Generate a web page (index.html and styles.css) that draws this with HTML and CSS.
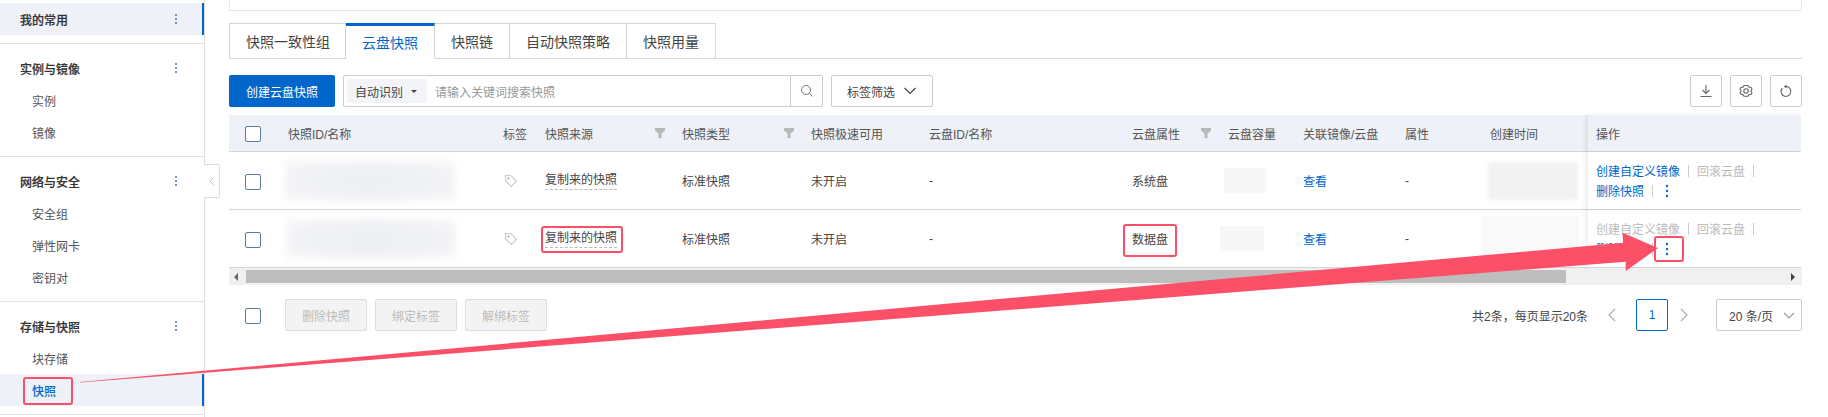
FILE: index.html
```html
<!DOCTYPE html>
<html lang="zh-CN">
<head>
    <meta charset="UTF-8" />
    <meta name="viewport" content="width=device-width, initial-scale=1" />
    <title>云盘快照</title>
    <link rel="stylesheet" href="styles.css">
</head>
<body>
    <div class="page">
        <aside class="sidebar">
            <div class="nav-group nav-group-first">
                <div class="nav-title nav-active">我的常用 <svg class="kebab" width="4" height="12" viewBox="0 0 4 12"><circle cx="2" cy="2" r="1"/><circle cx="2" cy="6" r="1"/><circle cx="2" cy="10" r="1"/></svg></div>
            </div>
            <div class="nav-group">
                <div class="nav-title">实例与镜像 <svg class="kebab" width="4" height="12" viewBox="0 0 4 12"><circle cx="2" cy="2" r="1"/><circle cx="2" cy="6" r="1"/><circle cx="2" cy="10" r="1"/></svg></div>
                <div class="nav-item">实例</div>
                <div class="nav-item">镜像</div>
            </div>
            <div class="nav-group">
                <div class="nav-title">网络与安全 <svg class="kebab" width="4" height="12" viewBox="0 0 4 12"><circle cx="2" cy="2" r="1"/><circle cx="2" cy="6" r="1"/><circle cx="2" cy="10" r="1"/></svg></div>
                <div class="nav-item">安全组</div>
                <div class="nav-item">弹性网卡</div>
                <div class="nav-item">密钥对</div>
            </div>
            <div class="nav-group">
                <div class="nav-title">存储与快照 <svg class="kebab" width="4" height="12" viewBox="0 0 4 12"><circle cx="2" cy="2" r="1"/><circle cx="2" cy="6" r="1"/><circle cx="2" cy="10" r="1"/></svg></div>
                <div class="nav-item">块存储</div>
                <div class="nav-item nav-active nav-current">快照</div>
            </div>
            <div class="collapse-tab">
                <svg width="6" height="10" viewBox="0 0 6 10"><path d="M5 1 1 5l4 4" fill="none" stroke="#c4c4c4" stroke-width="1"/></svg>
            </div>
        </aside>

        <main class="content">
            <div class="top-box"></div>

            <div class="tabs">
                <div class="tab tab-first">快照一致性组</div>
                <div class="tab tab-active">云盘快照</div>
                <div class="tab">快照链</div>
                <div class="tab">自动快照策略</div>
                <div class="tab">快照用量</div>
            </div>

            <div class="toolbar">
                <button class="btn-primary">创建云盘快照</button>
                <div class="search">
                    <div class="search-type">自动识别 <span class="caret"></span></div>
                    <div class="search-input">请输入关键词搜索快照</div>
                    <div class="search-btn">
                        <svg width="14" height="14" viewBox="0 0 14 14" fill="none" stroke="#777" stroke-width="1"><circle cx="6" cy="6" r="4.5"/><path d="m9.5 9.5 3 3"/></svg>
                    </div>
                </div>
                <button class="btn-tags">标签筛选
                    <svg width="14" height="8" viewBox="0 0 14 8" fill="none" stroke="#444" stroke-width="1.2"><path d="m1.500 1 5.500 5.500L12.500 1"/></svg>
                </button>
                <div class="toolbar-right">
                    <button class="btn-icon">
                        <svg width="14" height="14" viewBox="0 0 14 14" fill="none" stroke="#666" stroke-width="1.100"><path d="M7 1v8.500M3.500 6 7 9.500 10.500 6M1.500 12.500h11"/></svg>
                    </button>
                    <button class="btn-icon">
                        <svg width="14" height="14" viewBox="0 0 14 14" fill="none" stroke="#666" stroke-width="1.100" stroke-linejoin="round"><path d="M5 1.500h4l1 1.700 2 .1 1 1.700-1 1.900 1 1.900-1 1.700-2 .1-1 1.700H5l-1-1.700-2-.1-1-1.700 1-1.900-1-1.900 1-1.700 2-.1z"/><circle cx="7" cy="7" r="2.200"/></svg>
                    </button>
                    <button class="btn-icon">
                        <svg width="14" height="14" viewBox="0 0 14 14" fill="none" stroke="#666" stroke-width="1.100"><path d="M7 2.500A4.900 4.900 0 1 1 3.400 4"/><path d="M7.500 .5v4L4.800 2.500z" fill="#666" stroke="none"/></svg>
                    </button>
                </div>
            </div>

            <div class="table-wrap">
                <table class="snap-table">
                    <colgroup>
                        <col class="c-check"><col class="c-id"><col class="c-tag"><col class="c-src"><col class="c-type"><col class="c-fast"><col class="c-disk"><col class="c-attr"><col class="c-size"><col class="c-link"><col class="c-prop"><col class="c-time"><col class="c-op">
                    </colgroup>
                    <thead>
                        <tr>
                            <th class="cell-check"><span class="checkbox"></span></th>
                            <th>快照ID/名称</th>
                            <th>标签</th>
                            <th><div class="th-filter">快照来源 <svg class="funnel" width="12" height="12" viewBox="0 0 12 12"><path d="M1 1h10v2.500L7.500 6.500V11h-3V6.500L1 3.500z"/></svg></div></th>
                            <th><div class="th-filter">快照类型 <svg class="funnel" width="12" height="12" viewBox="0 0 12 12"><path d="M1 1h10v2.500L7.500 6.500V11h-3V6.500L1 3.500z"/></svg></div></th>
                            <th>快照极速可用</th>
                            <th>云盘ID/名称</th>
                            <th><div class="th-filter">云盘属性 <svg class="funnel" width="12" height="12" viewBox="0 0 12 12"><path d="M1 1h10v2.500L7.500 6.500V11h-3V6.500L1 3.500z"/></svg></div></th>
                            <th>云盘容量</th>
                            <th>关联镜像/云盘</th>
                            <th>属性</th>
                            <th>创建时间</th>
                            <th class="cell-op">操作</th>
                        </tr>
                    </thead>
                    <tbody>
                        <tr>
                            <td class="cell-check"><span class="checkbox"></span></td>
                            <td><div class="blur-id"></div></td>
                            <td><svg class="tag-icon" width="14" height="14" viewBox="0 0 14 14" fill="none" stroke="#ccc" stroke-width="1.200"><path d="M1.500 1.500h5.200l5.800 5.800-5.200 5.200-5.800-5.800z"/><circle cx="4.500" cy="4.500" r=".8"/></svg></td>
                            <td><span class="dashed">复制来的快照</span></td>
                            <td>标准快照</td>
                            <td>未开启</td>
                            <td>-</td>
                            <td>系统盘</td>
                            <td><div class="blur-size"></div></td>
                            <td><a class="link">查看</a></td>
                            <td>-</td>
                            <td><div class="blur-time"></div></td>
                            <td class="cell-op">
                                <div class="op-line"><a class="link">创建自定义镜像</a><i class="sep"></i><span class="off">回滚云盘</span><i class="sep"></i></div>
                                <div class="op-line"><a class="link">删除快照</a><i class="sep"></i><svg class="kebab kebab-op" width="4" height="14" viewBox="0 0 4 14"><circle cx="2" cy="2" r="1.200"/><circle cx="2" cy="7" r="1.200"/><circle cx="2" cy="12" r="1.200"/></svg></div>
                            </td>
                        </tr>
                        <tr>
                            <td class="cell-check"><span class="checkbox"></span></td>
                            <td><div class="blur-id blur-id-2"></div></td>
                            <td><svg class="tag-icon" width="14" height="14" viewBox="0 0 14 14" fill="none" stroke="#ccc" stroke-width="1.200"><path d="M1.500 1.500h5.200l5.800 5.800-5.200 5.200-5.800-5.800z"/><circle cx="4.500" cy="4.500" r=".8"/></svg></td>
                            <td><span class="dashed">复制来的快照</span></td>
                            <td>标准快照</td>
                            <td>未开启</td>
                            <td>-</td>
                            <td>数据盘</td>
                            <td><div class="blur-size blur-size-2"></div></td>
                            <td><a class="link">查看</a></td>
                            <td>-</td>
                            <td><div class="blur-time blur-time-2"></div></td>
                            <td class="cell-op">
                                <div class="op-line"><span class="off">创建自定义镜像</span><i class="sep"></i><span class="off">回滚云盘</span><i class="sep"></i></div>
                                <div class="op-line"><a class="link">删除快照</a><i class="sep"></i><svg class="kebab kebab-op" width="4" height="14" viewBox="0 0 4 14"><circle cx="2" cy="2" r="1.200"/><circle cx="2" cy="7" r="1.200"/><circle cx="2" cy="12" r="1.200"/></svg></div>
                            </td>
                        </tr>
                    </tbody>
                </table>
                <div class="scrollbar">
                    <span class="arrow-left"></span>
                    <div class="thumb"></div>
                    <span class="arrow-right"></span>
                </div>
            </div>

            <div class="footer">
                <div class="cell-check footer-check"><span class="checkbox"></span></div>
                <button class="btn-off">删除快照</button>
                <button class="btn-off">绑定标签</button>
                <button class="btn-off">解绑标签</button>
                <div class="pager">
                    <span class="pager-total">共2条，每页显示20条</span>
                    <svg width="8" height="14" viewBox="0 0 8 14" fill="none" stroke="#aaa" stroke-width="1.100"><path d="M7 1 1 7l6 6"/></svg>
                    <span class="page-num">1</span>
                    <svg width="8" height="14" viewBox="0 0 8 14" fill="none" stroke="#aaa" stroke-width="1.100"><path d="m1 1 6 6-6 6"/></svg>
                    <div class="page-size">20 条/页
                        <svg width="12" height="7" viewBox="0 0 12 7" fill="none" stroke="#999" stroke-width="1.100"><path d="m1 1 5 5 5-5"/></svg>
                    </div>
                </div>
            </div>
        </main>

        <!-- annotations drawn over the screenshot -->
        <div class="mark mark-nav"></div>
        <div class="mark mark-src"></div>
        <div class="mark mark-disk"></div>
        <div class="mark mark-more"></div>
        <svg class="arrow" width="1828" height="417" viewBox="0 0 1828 417"><polygon points="80,382 1623,242.700 1622.700,232.700 1658,248 1625.700,271 1625.700,261.700 80,382.600"/></svg>
    </div>
</body>
</html>
```

FILE: styles.css
```css
* {
    box-sizing: border-box;
}
html,
body {
    margin: 0;
    background-color: #fff;
}
body {
    font-family: "Liberation Sans", "Noto Sans CJK SC", sans-serif;
    font-size: 12px;
    color: #444;
}
button {
    font-family: inherit;
    font-size: 12px;
    padding: 0;
}
.page {
    position: relative;
    display: flex;
    width: 1828px;
    height: 417px;
    overflow: hidden;
}

/* sidebar */
.sidebar {
    position: relative;
    flex: none;
    width: 205px;
    border-right: 1px solid #ddd;
}
.nav-group {
    padding: 8px 0;
    border-bottom: 1px solid #e2e2e2;
}
.nav-group-first {
    padding-top: 3px;
}
.nav-title,
.nav-item {
    display: flex;
    align-items: center;
    justify-content: space-between;
    height: 32px;
}
.nav-title {
    padding: 0 26px 0 20px;
    font-weight: 500;
    color: #333;
    -webkit-text-stroke: 0.2px #333;
}
.nav-item {
    padding-left: 32px;
    color: #555;
}
.nav-active {
    background-color: #eef1f7;
    border-right: 2px solid #0066cc;
    padding-right: 24px;
}
.nav-current {
    color: #0066cc;
    font-weight: 500;
}
.kebab {
    fill: #4f6f9f;
}
.kebab-op {
    fill: #0066cc;
    margin-left: 4px;
}
.collapse-tab {
    position: absolute;
    top: 164px;
    left: 204px;
    display: flex;
    align-items: center;
    justify-content: center;
    width: 16px;
    height: 34px;
    background-color: #fff;
    border: 1px solid #ddd;
    border-left: none;
    border-radius: 0 2px 2px 0;
}

/* main */
.content {
    flex: 1;
    padding: 0 26px 0 24px;
}
.top-box {
    height: 11px;
    border: 1px solid #e6e6e6;
    border-top: none;
}
.tabs {
    display: flex;
    height: 36px;
    margin-top: 12px;
    border-bottom: 1px solid #ddd;
}
.tab {
    display: flex;
    align-items: center;
    justify-content: center;
    height: 36px;
    padding: 0 16px;
    font-size: 14px;
    color: #444;
    border: 1px solid #d5d5d5;
    border-left: none;
}
.tab-first {
    padding-right: 15px;
    border-left: 1px solid #d5d5d5;
}
.tab-active {
    color: #0066cc;
    border-top: 3px solid #0066cc;
    border-bottom-color: #fff;
}

.toolbar {
    display: flex;
    gap: 8px;
    margin-top: 16px;
}
.btn-primary {
    width: 106px;
    height: 32px;
    color: #fff;
    background-color: #0066cc;
    border: none;
    border-radius: 2px;
}
.search {
    display: flex;
    align-items: center;
    width: 480px;
    height: 32px;
    border: 1px solid #ccc;
    border-radius: 2px;
}
.search-type {
    display: flex;
    align-items: center;
    width: 80px;
    height: 24px;
    margin-left: 3px;
    padding-left: 8px;
    background-color: #f3f4f7;
    color: #444;
}
.caret {
    width: 0;
    height: 0;
    margin-left: 8px;
    border: 3px solid transparent;
    border-top: 3px solid #444;
    border-bottom: none;
}
.search-input {
    flex: 1;
    padding-left: 8px;
    color: #999;
}
.search-btn {
    display: flex;
    align-items: center;
    justify-content: center;
    width: 32px;
    height: 30px;
    border-left: 1px solid #ccc;
}
.btn-tags {
    display: flex;
    align-items: center;
    justify-content: center;
    gap: 8px;
    width: 102px;
    height: 32px;
    color: #444;
    background-color: #fff;
    border: 1px solid #ccc;
    border-radius: 2px;
}
.toolbar-right {
    display: flex;
    gap: 8px;
    margin-left: auto;
}
.btn-icon {
    display: flex;
    align-items: center;
    justify-content: center;
    width: 32px;
    height: 32px;
    background-color: #fff;
    border: 1px solid #ccc;
    border-radius: 2px;
}

/* table */
.table-wrap {
    margin-top: 8px;
}
.snap-table {
    width: 1572px;
    table-layout: fixed;
    border-collapse: separate;
    border-spacing: 0;
}
.c-check { width: 59px; }
.c-id { width: 215px; }
.c-tag { width: 42px; }
.c-src { width: 137px; }
.c-type { width: 129px; }
.c-fast { width: 118px; }
.c-disk { width: 203px; }
.c-attr { width: 96px; }
.c-size { width: 75px; }
.c-link { width: 102px; }
.c-prop { width: 85px; }
.c-time { width: 98px; }
.c-op { width: 213px; }

.snap-table th,
.snap-table td {
    padding: 0;
    text-align: left;
    vertical-align: middle;
    white-space: nowrap;
    border-bottom: 1px solid #d5d5d5;
}
.snap-table th {
    height: 37px;
    font-weight: 400;
    color: #555;
    background-color: #eef1f7;
}
.snap-table td {
    height: 58px;
}
.cell-check {
    padding-left: 16px !important;
}
.checkbox {
    display: block;
    width: 16px;
    height: 16px;
    margin-top: 2px;
    background-color: #fff;
    border: 1px solid #5b7ba3;
    border-radius: 2px;
}
.th-filter {
    display: flex;
    align-items: center;
    justify-content: space-between;
    padding-right: 16px;
}
.funnel {
    fill: #b8b8b8;
}
.tag-icon {
    display: block;
    margin-left: 1px;
}
.dashed {
    display: inline-block;
    line-height: 17px;
    border-bottom: 1px dashed #bbb;
}
.link {
    color: #0066cc;
}
.off {
    color: #bbb;
}
.cell-op {
    padding-left: 8px !important;
    background-color: #fff;
    box-shadow: -3px 0 4px rgba(0, 0, 0, 0.07);
}
th.cell-op {
    background-color: #eef1f7;
}
.op-line {
    display: flex;
    align-items: center;
    height: 20px;
}
.sep {
    width: 1px;
    height: 12px;
    margin: 0 8px;
    background-color: #ccc;
}

/* blurred out values */
.blur-id {
    width: 170px;
    height: 40px;
    margin-left: -3px;
    background: radial-gradient(ellipse at 50% 50%, #eceef2 0, #f1f2f5 60%, #f9f9f9 100%);
    filter: blur(3px);
}
.blur-id-2 {
    margin-left: -2px;
}
.blur-size {
    width: 42px;
    height: 25px;
    margin-left: -4px;
    background-color: #f7f7f7;
}
.blur-size-2 {
    width: 44px;
    margin-left: -8px;
}
.blur-time {
    width: 90px;
    height: 38px;
    margin-left: -2px;
    background-color: #f2f2f2;
    filter: blur(1.500px);
}
.blur-time-2 {
    width: 98px;
    height: 46px;
    margin-left: -8px;
    background-color: #f9f9f9;
}

.scrollbar {
    display: flex;
    align-items: center;
    height: 17px;
    background-color: #f0f0f0;
}
.arrow-left,
.arrow-right {
    width: 0;
    height: 0;
    border: 4px solid transparent;
}
.arrow-left {
    margin-left: 5px;
    border-right: 4px solid #666;
    border-left: none;
}
.arrow-right {
    margin-left: 225px;
    border-left: 4px solid #444;
    border-right: none;
}
.thumb {
    width: 1320px;
    height: 13px;
    margin-left: 8px;
    background-color: #bdbdbd;
}

/* footer */
.footer {
    display: flex;
    align-items: center;
    gap: 8px;
    margin-top: 14px;
}
.footer-check {
    width: 48px;
}
.btn-off {
    width: 82px;
    height: 32px;
    color: #bbb;
    background-color: #f3f3f3;
    border: 1px solid #ddd;
    border-radius: 2px;
}
.pager {
    display: flex;
    align-items: center;
    margin-left: auto;
}
.pager-total {
    margin-right: 20px;
}
.page-num {
    display: flex;
    align-items: center;
    justify-content: center;
    width: 32px;
    height: 32px;
    margin: 0 12px 0 20px;
    color: #0066cc;
    border: 1px solid #0066cc;
    border-radius: 2px;
}
.page-size {
    display: flex;
    align-items: center;
    justify-content: space-between;
    width: 86px;
    height: 32px;
    margin-left: 28px;
    padding: 0 6px 0 12px;
    border: 1px solid #ccc;
    border-radius: 2px;
}

/* annotations */
.mark {
    position: absolute;
    border: 2px solid #fb4f67;
    border-radius: 3px;
}
.mark-nav {
    top: 377px;
    left: 23px;
    width: 50px;
    height: 28px;
}
.mark-src {
    top: 226px;
    left: 541px;
    width: 82px;
    height: 27px;
}
.mark-disk {
    top: 224px;
    left: 1123px;
    width: 54px;
    height: 33px;
}
.mark-more {
    top: 236px;
    left: 1654px;
    width: 30px;
    height: 26px;
}
.arrow {
    position: absolute;
    top: 0;
    left: 0;
    fill: #fb5068;
}
```
